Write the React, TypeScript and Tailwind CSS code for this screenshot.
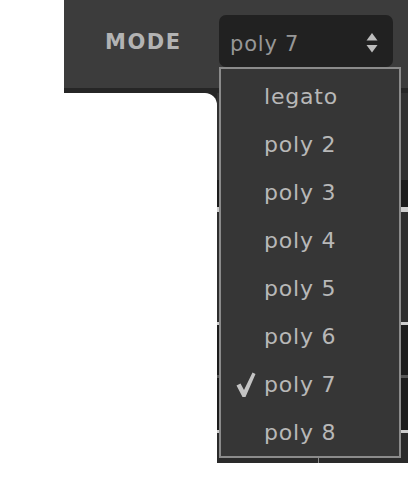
import React from "react";

const options = ["legato", "poly 2", "poly 3", "poly 4", "poly 5", "poly 6", "poly 7", "poly 8"];
const selected = "poly 7";

function Check() {
  return (
    <svg width="20" height="26" viewBox="0 0 20 26">
      <path d="M0.5 13.5 L4.5 11.5 L8 18 L16.5 0.5 L19.5 2 L9.5 25 L6.5 25 Z" fill="#c4c4c4" />
    </svg>
  );
}

function UpDown() {
  return (
    <svg width="12" height="20" viewBox="0 0 12 20">
      <polygon points="6,0 11.5,7.5 0.5,7.5" fill="#bdbdbd" />
      <polygon points="0.5,12 11.5,12 6,19.5" fill="#bdbdbd" />
    </svg>
  );
}

export default function App() {
  return (
    <div
      className="relative w-[408px] h-[493px] overflow-hidden bg-white flex"
      style={{ fontFamily: '"DejaVu Sans", Verdana, sans-serif' }}
    >
      <div className="w-16 shrink-0 bg-white" />

      <div className="flex-1 flex flex-col">
        {/* header bar */}
        <div className="h-[88px] bg-[#3c3c3c] flex items-start pt-[15px]">
          <div className="w-[155px] pl-[41px] pt-[15px]">
            <span className="text-[21px] font-bold tracking-[1.5px] text-[#b3b3b3] leading-[24px]">MODE</span>
          </div>
          <div className="w-[174px] h-[52px] rounded-[7px] bg-[#212121] flex items-start justify-between pl-[11px] pr-[15px] pt-[17px]">
            <span className="text-[21px] leading-[24px] tracking-[0.8px] text-[#979797]">{selected}</span>
            <div className="pt-[1px]">
              <UpDown />
            </div>
          </div>
        </div>
        <div className="h-[5px] bg-[#262626]" />

        {/* content beneath */}
        <div className="flex-1 flex items-start">
          <div className="w-[153px] h-full bg-[#262626]">
            <div className="h-full bg-white rounded-tr-[12px]" />
          </div>
          <div className="flex-1 h-[370px] flex flex-col bg-[#2c2c2c]">
            <div className="h-[87px] bg-[#313131]" />
            <div className="h-[27px] bg-[#1c1c1c]" />
            <div className="h-[5px] bg-[#cfcfcf]" />
            <div className="h-[110px] bg-[#2e2e2e]" />
            <div className="h-[3px] bg-[#cfcfcf]" />
            <div className="h-[50px] bg-[#1c1c1c]" />
            <div className="h-[3px] bg-[#555555]" />
            <div className="h-[52px] bg-[#1c1c1c]" />
            <div className="h-[3px] bg-[#cccccc]" />
            <div className="flex-1 flex bg-[#2a2a2a]">
              <div className="w-[101px]" />
              <div className="w-px bg-[#8a8a8a]" />
            </div>
          </div>
        </div>
      </div>

      {/* open dropdown menu */}
      <ul className="absolute left-[219px] top-[67px] w-[182px] h-[391px] border-2 border-[#8b8b8b] bg-[#363636] pt-[4px]">
        {options.map((opt) => (
          <li key={opt} className="h-[48px] flex items-center pl-[15px]">
            <div className="w-[20px] h-[26px]">{opt === selected ? <Check /> : null}</div>
            <span className="ml-[8px] text-[22px] leading-[48px] tracking-[0.8px] text-[#b8b8b8]">{opt}</span>
          </li>
        ))}
      </ul>
    </div>
  );
}
